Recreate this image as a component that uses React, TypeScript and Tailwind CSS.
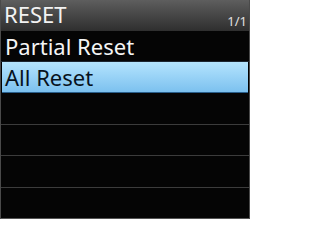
import React from "react";

export default function App() {
  const font = { fontFamily: '"Noto Sans", "Open Sans", sans-serif' };
  return (
    <div className="w-[250px] h-[219px] bg-black overflow-hidden flex flex-col" style={font}>
      <div className="h-[31px] shrink-0 flex items-start justify-between bg-gradient-to-b from-[#5e5e5e] to-[#2f2f2f] border-l border-r border-[#4a4a4a]">
        <span className="text-[22px] leading-none text-[#f2f2f2] pl-[3px] pt-[3px]">RESET</span>
        <span className="text-[13px] leading-none text-[#e0e0e0] pr-[2px] pt-[15px]">1/1</span>
      </div>
      <div className="flex-1 flex flex-col border-l border-r border-[#4a4a4a]">
        <div className="h-[31px] shrink-0 flex items-center border-b border-[#1c2630] bg-[#050505]">
          <span className="text-[22px] leading-none text-[#f5f5f5] pl-[4px] pb-[1px]">Partial Reset</span>
        </div>
        <div className="h-[31px] shrink-0 flex items-center mx-[1px] border-b border-[#2a5f8c] bg-gradient-to-b from-[#b4e4fd] to-[#7cc1ef]">
          <span className="text-[22px] leading-none text-[#07121c] pl-[3px] pb-[1px]">All Reset</span>
        </div>
        <div className="h-[32px] shrink-0 border-b border-[#3c3c3c] bg-[#050505]" />
        <div className="h-[31px] shrink-0 border-b border-[#3c3c3c] bg-[#050505]" />
        <div className="h-[32px] shrink-0 border-b border-[#3c3c3c] bg-[#050505]" />
        <div className="h-[31px] shrink-0 border-b border-[#555555] bg-[#050505]" />
      </div>
    </div>
  );
}
